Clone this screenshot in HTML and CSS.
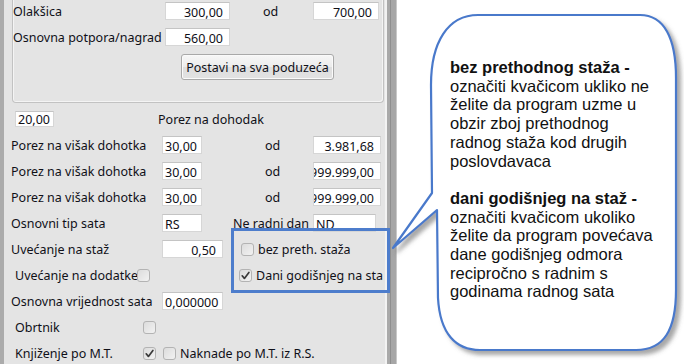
FILE: index.html
```html
<!DOCTYPE html>
<html lang="hr">
<head>
<meta charset="utf-8">
<title>Postavke obračuna</title>
<link rel="stylesheet" href="styles.css">
</head>
<body>
<div class="page">
  <div class="window">
    <div class="group">
      <div class="row">
        <span class="lbl lbl-g">Olakšica</span>
        <span class="field w65 num">300,00</span>
        <span class="od od-g">od</span>
        <span class="field w66 num">700,00</span>
      </div>
      <div class="row">
        <span class="lbl lbl-g">Osnovna potpora/nagrad</span>
        <span class="field w65 num">560,00</span>
      </div>
      <div class="btn-row">
        <button class="btn" type="button">Postavi na sva poduzeća</button>
      </div>
    </div>

    <div class="rows">
      <div class="row">
        <span class="field w39 ind">20,00</span>
        <span class="title">Porez na dohodak</span>
      </div>
      <div class="row">
        <span class="lbl">Porez na višak dohotka</span>
        <span class="field w40">30,00</span>
        <span class="od">od</span>
        <span class="field w68 num">3.981,68</span>
      </div>
      <div class="row">
        <span class="lbl">Porez na višak dohotka</span>
        <span class="field w40">30,00</span>
        <span class="od">od</span>
        <span class="field w68 num">99.999.999,00</span>
      </div>
      <div class="row">
        <span class="lbl">Porez na višak dohotka</span>
        <span class="field w40">30,00</span>
        <span class="od">od</span>
        <span class="field w68 num">99.999.999,00</span>
      </div>
      <div class="row">
        <span class="lbl">Osnovni tip sata</span>
        <span class="field w40">RS</span>
        <span class="nrd">Ne radni dan</span>
        <span class="field w63">ND</span>
      </div>
      <div class="row">
        <span class="lbl">Uvećanje na staž</span>
        <span class="field w61 num">0,50</span>
        <label class="chk chk-right"><span class="box"></span><span class="chk-text">bez preth. staža</span></label>
      </div>
      <div class="row">
        <span class="lbl lbl-ind lbl-dod">Uvećanje na dodatke</span>
        <span class="box"></span>
        <label class="chk chk-right2"><span class="box checked"><svg viewBox="0 0 13 13" width="13" height="13"><path d="M3.2 6.8 L5.4 9.4 L9.9 3.4" /></svg></span><span class="chk-text clip">Dani godišnjeg na staž</span></label>
      </div>
      <div class="row">
        <span class="lbl">Osnovna vrijednost sata</span>
        <span class="field w61">0,000000</span>
      </div>
      <div class="row">
        <span class="lbl lbl-ind lbl-obr">Obrtnik</span>
        <span class="box"></span>
      </div>
      <div class="row">
        <span class="lbl lbl-ind lbl-obr">Knjiženje po M.T.</span>
        <span class="box checked"><svg viewBox="0 0 13 13" width="13" height="13"><path d="M3.2 6.8 L5.4 9.4 L9.9 3.4" /></svg></span>
        <label class="chk chk-nak"><span class="box"></span><span class="chk-text">Naknade po M.T. iz R.S.</span></label>
      </div>
    </div>
  </div>
  <div class="frame-edge"></div>
  <div class="blank"></div>

  <div class="highlight"></div>

  <svg class="bubble-shape" viewBox="0 0 684 364" width="684" height="364" aria-hidden="true">
    <defs>
      <filter id="sh" x="-10%" y="-10%" width="130%" height="130%">
        <feDropShadow dx="4" dy="4" stdDeviation="2.2" flood-color="#606060" flood-opacity="0.55"/>
      </filter>
    </defs>
    <path filter="url(#sh)" d="M478 15 L640 15 C664 15 676 38 676 78 L676 290 C676 330 664 350 636 350 L480 350 C456 350 440 334 438 298 L437 210 L393 248 L432 193 L431 85 C431 42 448 15 478 15 Z" fill="#ffffff" stroke="#4a79cb" stroke-width="2.2" stroke-linejoin="round"/>
  </svg>

  <div class="callout">
    <p class="para"><b>bez prethodnog staža -</b><br>označiti kvačicom ukliko ne želite da program uzme u obzir zboj prethodnog radnog staža kod drugih poslovdavaca</p>
    <p class="para"><b>dani godišnjeg na staž -</b><br>označiti kvačicom ukoliko želite da program povećava dane godišnjeg odmora recipročno s radnim s godinama radnog sata</p>
  </div>
</div>
</body>
</html>
```

FILE: styles.css
```css
* { box-sizing: border-box; }
html, body { margin: 0; padding: 0; }
body {
  width: 684px;
  height: 364px;
  overflow: hidden;
  background: #ffffff;
  font-family: "Noto Sans", "DejaVu Sans", sans-serif;
  font-size: 12.5px;
  color: #101018;
}
.page {
  position: relative;
  display: flex;
  width: 684px;
  height: 364px;
}
.window {
  width: 385px;
  height: 364px;
  flex: none;
  background: #e4e4e4;
  border-left: 4px solid #ababab;
  overflow: hidden;
}
.frame-edge {
  width: 12px;
  flex: none;
  height: 364px;
  background: linear-gradient(to right, #f2f2f2 0, #f2f2f2 2px, #a9a9a9 2px, #a9a9a9 5px, #8e8e8e 5px, #8e8e8e 6px, #a6a6a6 6px, #a6a6a6 11px, #c8c8c8 11px, #c8c8c8 12px);
}
.blank { flex: 1; }

/* group box */
.group {
  margin: -2px 0 0 8px;
  width: 372px;
  border: 1px solid #c2c2c2;
  border-top: none;
  border-radius: 0 0 4px 4px;
  box-shadow: inset 1px 0 0 #f4f4f4, inset -1px -1px 0 #f4f4f4;
  padding: 0 0 22px 0;
}
.row {
  display: flex;
  align-items: center;
  height: 26px;
  white-space: nowrap;
}
.lbl { width: 151px; flex: none; }
.lbl-g { width: 152px; }
.lbl-ind { padding-left: 4px; }
.lbl-dod { width: 126px; }
.lbl-obr { width: 132px; }

.field {
  flex: none;
  height: 18px;
  line-height: 19px;
  background: #ffffff;
  border: 1px solid #d6d6d6;
  border-top-color: #c4c4c4;
  padding: 0 2px;
  display: flex;
  overflow: hidden;
  white-space: nowrap;
}
.field.num { justify-content: flex-end; padding-right: 6px; }
.w39 { width: 39px; height: 16px; line-height: 16px; }
.w40 { width: 40px; }
.w61 { width: 61px; }
.w63 { width: 63px; }
.w65 { width: 65px; }
.w66 { width: 66px; }
.w68 { width: 68px; }
.ind { margin-left: 4px; }

.od { width: 111px; flex: none; padding-left: 63px; }
.od-g { width: 83px; padding-left: 33px; }
.nrd { width: 111px; flex: none; padding-left: 31px; }
.title { margin-left: 104px; }

.btn-row { display: flex; padding-left: 168px; margin-top: 4px; }
.btn {
  width: 153px;
  height: 26px;
  font-family: inherit;
  font-size: 12.5px;
  color: #101018;
  padding: 0;
  border: 1px solid #a9a9a9;
  border-radius: 3px;
  background: linear-gradient(#f7f7f7, #ececec 50%, #dedede 51%, #e2e2e2);
  box-shadow: inset 0 0 0 1px #fafafa;
}

.rows { padding: 3px 0 0 7px; }

/* checkboxes */
.box {
  flex: none;
  display: inline-block;
  width: 13px;
  height: 13px;
  border: 1px solid #b3b3b3;
  border-radius: 3px;
  background: linear-gradient(135deg, #dcdcdc, #f2f2f2);
  position: relative;
}
.box svg { display: block; position: absolute; left: -1px; top: -1px; }
.box svg path { fill: none; stroke: #3a3a3a; stroke-width: 1.7; stroke-linecap: round; stroke-linejoin: round; }
.chk { display: flex; align-items: center; flex: none; }
.chk-text { margin-left: 4px; }
.chk-right { margin-left: 18px; }
.chk-right2 { margin-left: 89px; }
.chk-nak { margin-left: 7px; }
.clip { width: 127px; overflow: hidden; }

.highlight {
  position: absolute;
  left: 231px;
  top: 228px;
  width: 159px;
  height: 65px;
  border: 3px solid #4d7dcc;
}

.bubble-shape {
  position: absolute;
  left: 0;
  top: 0;
  pointer-events: none;
}
.callout {
  position: absolute;
  left: 450px;
  top: 58px;
  width: 212px;
  font-family: "Liberation Sans", Arial, sans-serif;
  font-size: 16.5px;
  line-height: 18.7px;
  color: #111111;
}
.para { margin: 0 0 18.7px 0; }
.para b { font-weight: bold; }
```
